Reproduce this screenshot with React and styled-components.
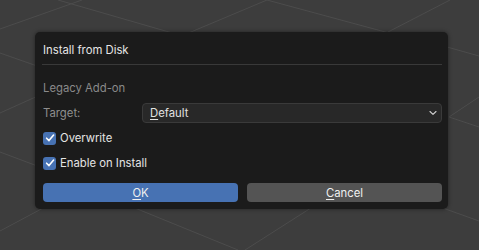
import React from "react";
import styled, { createGlobalStyle } from "styled-components";

const Global = createGlobalStyle`
  html, body { margin: 0; padding: 0; background: #3d3d3d; }
  body { font-family: Inter, "Noto Sans", "DejaVu Sans", sans-serif; }
  * { box-sizing: border-box; }
`;

const Viewport = styled.div`
  position: relative;
  width: 479px;
  height: 250px;
  overflow: hidden;
  background: #3d3d3d;
  display: flex;
  align-items: flex-start;
`;

const Grid = styled.svg`
  position: absolute;
  inset: 0;
  width: 479px;
  height: 250px;
`;

const Dialog = styled.div`
  position: relative;
  margin: 32px 0 0 35px;
  width: 413px;
  height: 177px;
  background: #1b1b1b;
  border-radius: 5px;
  box-shadow: 0 0 4px rgba(0, 0, 0, 0.45);
  padding: 0 6px 0 8px;
  display: flex;
  flex-direction: column;
  font-size: 11.3px;
`;

const Title = styled.div`
  margin-top: 11px;
  height: 14px;
  line-height: 14px;
  color: #e6e6e6;
`;

const Separator = styled.div`
  margin: 7px 0 0 -1px;
  height: 1px;
  background: #393939;
`;

const SectionLabel = styled.div`
  margin-top: 16px;
  height: 14px;
  line-height: 14px;
  color: #8a8a8a;
`;

const Row = styled.div`
  display: flex;
  align-items: center;
  height: 20px;
  margin-top: ${(p) => p.$top}px;
`;

const FieldLabel = styled.div`
  width: 99px;
  color: #8e8e8e;
`;

const Select = styled.div`
  flex: 1;
  height: 20px;
  background: #282828;
  border: 1px solid #3a3a3a;
  border-radius: 4px;
  display: flex;
  align-items: center;
  justify-content: space-between;
  padding: 0 4px 0 7px;
  color: #e2e2e2;
`;

const Key = styled.span`
  text-decoration: underline;
  text-underline-offset: 2px;
`;

const Box = styled.span`
  width: 13px;
  height: 13px;
  border-radius: 3px;
  background: #4772b3;
  display: flex;
  align-items: center;
  justify-content: center;
  margin-right: 4px;
`;

const CheckLabel = styled.span`
  color: #e4e4e4;
`;

const Buttons = styled.div`
  display: flex;
  gap: 9px;
  margin-top: 10px;
  height: 19px;
`;

const Button = styled.div`
  flex: 1;
  border-radius: 4px;
  background: ${(p) => (p.$primary ? "#4772b3" : "#545454")};
  color: #f0f0f0;
  display: flex;
  align-items: center;
  justify-content: center;
`;

const Check = () => (
  <svg width="10" height="10" viewBox="0 0 10 10">
    <path d="M1.6 5.2 L4 7.6 L8.6 2" fill="none" stroke="#fff" strokeWidth="1.6" strokeLinecap="round" strokeLinejoin="round" />
  </svg>
);

const Chevron = () => (
  <svg width="8" height="6" viewBox="0 0 8 6">
    <path d="M1 1.5 L4 4.3 L7 1.5" fill="none" stroke="#d0d0d0" strokeWidth="1.1" strokeLinecap="round" strokeLinejoin="round" />
  </svg>
);

const lines = [
  [0, 29, 82, 0],
  [58, 0, 200, 41],
  [160, 45, 267, 0],
  [267, 0, 400, 36],
  [388, 32, 450, 0],
  [440, 45, 479, 56],
  [449, 117, 479, 97],
  [449, 117, 479, 127],
  [0, 53, 40, 67],
  [0, 113, 40, 95],
  [0, 152, 40, 167],
  [0, 231, 45, 207],
  [130, 206, 238, 250],
  [314, 206, 245, 250],
  [440, 207, 479, 221],
];

export default function App() {
  return (
    <>
      <Global />
      <Viewport>
        <Grid viewBox="0 0 479 250">
          {lines.map(([x1, y1, x2, y2], i) => (
            <line key={i} x1={x1} y1={y1} x2={x2} y2={y2} stroke="#4c4c4c" strokeWidth="1" />
          ))}
        </Grid>
        <Dialog>
          <Title>Install from Disk</Title>
          <Separator />
          <SectionLabel>Legacy Add-on</SectionLabel>
          <Row $top={8}>
            <FieldLabel>Target:</FieldLabel>
            <Select>
              <span><Key>D</Key>efault</span>
              <Chevron />
            </Select>
          </Row>
          <Row $top={5}>
            <Box><Check /></Box>
            <CheckLabel>Overwrite</CheckLabel>
          </Row>
          <Row $top={5}>
            <Box><Check /></Box>
            <CheckLabel>Enable on Install</CheckLabel>
          </Row>
          <Buttons>
            <Button $primary><span><Key>O</Key>K</span></Button>
            <Button><span><Key>C</Key>ancel</span></Button>
          </Buttons>
        </Dialog>
      </Viewport>
    </>
  );
}
